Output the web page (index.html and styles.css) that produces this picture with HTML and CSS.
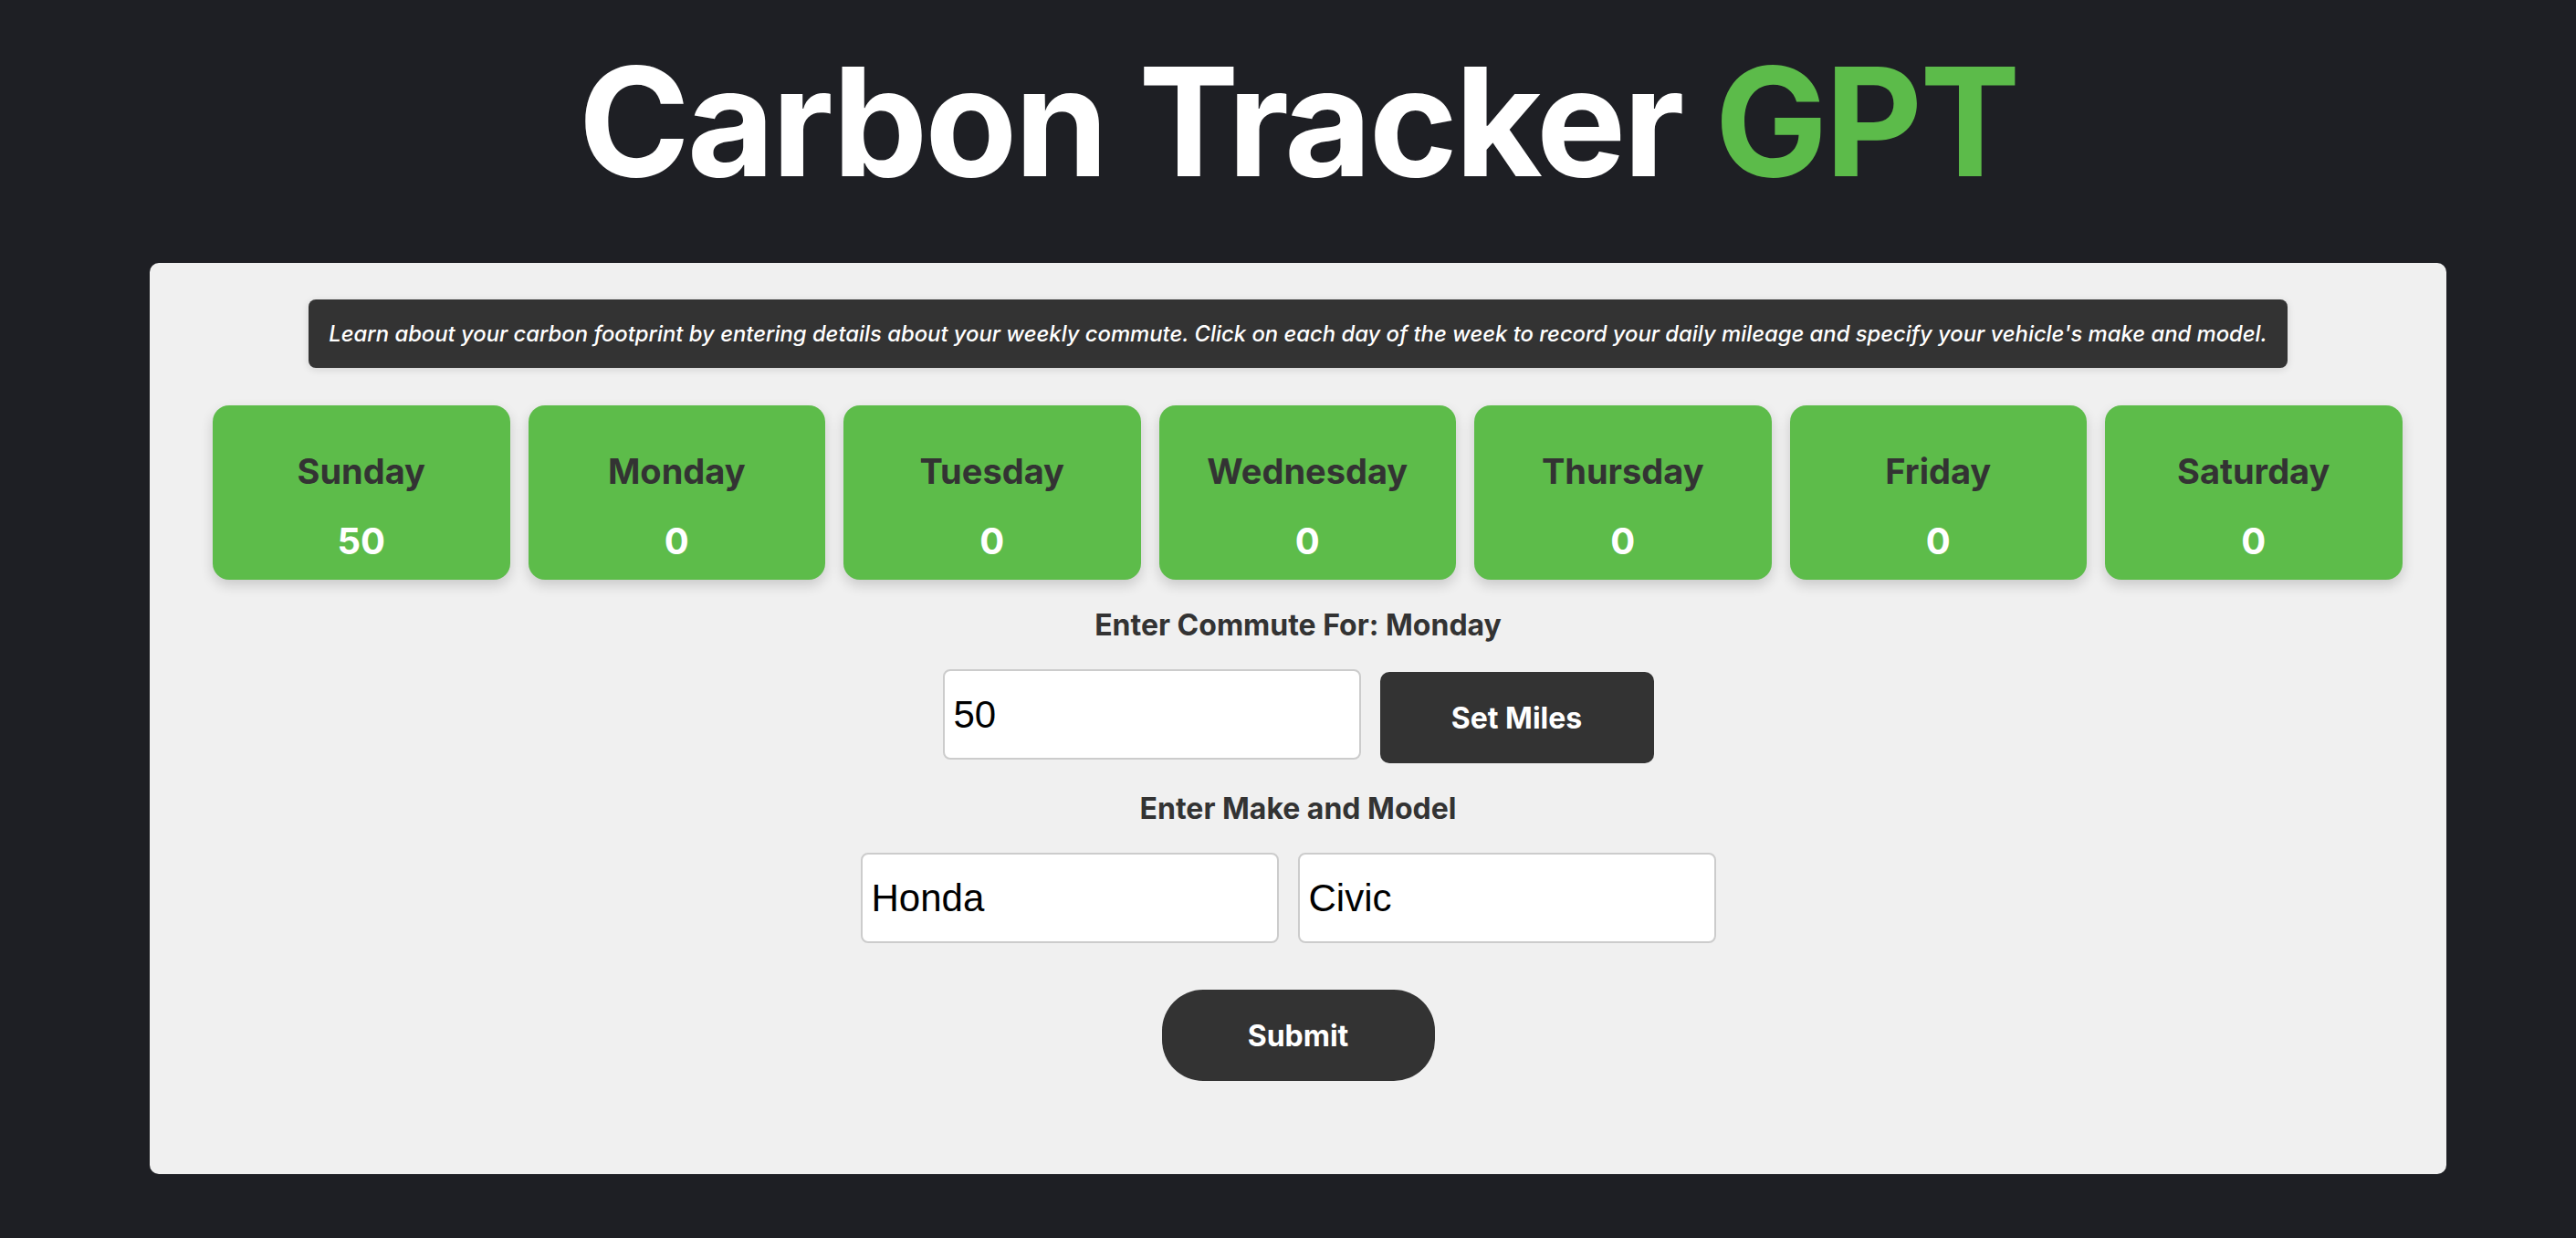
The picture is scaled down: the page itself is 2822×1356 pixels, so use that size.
FILE: index.html
```html
<!DOCTYPE html>
<html lang="en">
<head>
<meta charset="utf-8">
<title>Carbon Tracker GPT</title>
<link rel="stylesheet" href="styles.css">
</head>
<body>
<div class="page">
  <h1 class="title">Carbon Tracker <span class="accent">GPT</span></h1>
  <main class="panel">
    <div class="info-wrap">
      <p class="info">Learn about your carbon footprint by entering details about your weekly commute. Click on each day of the week to record your daily mileage and specify your vehicle's make and model.</p>
    </div>
    <div class="days">
      <div class="day"><div class="day-name">Sunday</div><div class="day-miles">50</div></div>
      <div class="day"><div class="day-name">Monday</div><div class="day-miles">0</div></div>
      <div class="day"><div class="day-name">Tuesday</div><div class="day-miles">0</div></div>
      <div class="day"><div class="day-name">Wednesday</div><div class="day-miles">0</div></div>
      <div class="day"><div class="day-name">Thursday</div><div class="day-miles">0</div></div>
      <div class="day"><div class="day-name">Friday</div><div class="day-miles">0</div></div>
      <div class="day"><div class="day-name">Saturday</div><div class="day-miles">0</div></div>
    </div>
    <h2 class="label">Enter Commute For: Monday</h2>
    <div class="row">
      <input class="field" type="text" value="50">
      <button class="btn-set" type="button">Set Miles</button>
    </div>
    <h2 class="label">Enter Make and Model</h2>
    <div class="row">
      <input class="field" type="text" value="Honda">
      <input class="field" type="text" value="Civic">
    </div>
    <div class="submit-row">
      <button class="btn-submit" type="button">Submit</button>
    </div>
  </main>
</div>
</body>
</html>
```

FILE: styles.css
```css
html, body {
  margin: 0;
  padding: 0;
}
body {
  background: #1e1f24;
  font-family: Inter, "Noto Sans", sans-serif;
  color: #333333;
}
.page {
  padding-left: 22px;
  padding-bottom: 68px;
}
.title {
  margin: 51px 0 72px;
  font-size: 165px;
  line-height: 165px;
  font-weight: 700;
  letter-spacing: -3px;
  text-align: center;
  color: #ffffff;
}
.accent {
  color: #5cbb4a;
}
.panel {
  width: 2516px;
  margin: 0 auto;
  box-sizing: border-box;
  background: #f0f0f0;
  border-radius: 10px;
  padding: 40px 0 102px;
  display: flex;
  flex-direction: column;
  align-items: center;
}
.info-wrap {
  display: flex;
  justify-content: center;
}
.info {
  margin: 0;
  background: #333333;
  color: #ffffff;
  font-size: 23.8px;
  font-style: italic;
  font-weight: 500;
  line-height: 75px;
  height: 75px;
  padding: 0 22px;
  border-radius: 8px;
  white-space: nowrap;
  box-shadow: 0 2px 8px rgba(0, 0, 0, 0.12);
}
.days {
  align-self: stretch;
  display: flex;
  gap: 20px;
  margin: 41px 0 0 69px;
}
.day {
  width: 325.5px;
  height: 191px;
  box-sizing: border-box;
  background: #5dbc4a;
  border-radius: 18px;
  box-shadow: 0 6px 14px rgba(0, 0, 0, 0.16);
  display: flex;
  flex-direction: column;
  align-items: center;
  padding-top: 48px;
  gap: 29px;
  font-size: 38px;
  line-height: 48px;
  font-weight: 700;
}
.day-name {
  color: #333333;
}
.day-miles {
  color: #ffffff;
  font-size: 40px;
}
.label {
  margin: 32px 0 30px;
  font-size: 32px;
  line-height: 36px;
  font-weight: 700;
  color: #333333;
}
.row {
  display: flex;
  align-items: flex-start;
  justify-content: center;
}
.field {
  width: 458px;
  height: 99px;
  box-sizing: border-box;
  border: 2px solid #cccccc;
  border-radius: 8px;
  background: #ffffff;
  padding: 0 10px;
  font-family: "Liberation Sans", Arial, sans-serif;
  font-size: 42px;
  color: #000000;
  margin: 0 22px 0 0;
  outline: none;
}
.row .field:first-child {
  margin-right: 21px;
}
.btn-set {
  width: 300px;
  height: 100px;
  margin-top: 3px;
  border: none;
  border-radius: 10px;
  background: #333333;
  color: #ffffff;
  font-family: Inter, "Noto Sans", sans-serif;
  font-size: 32px;
  font-weight: 700;
}
.submit-row {
  display: flex;
  justify-content: center;
  margin-top: 51px;
}
.btn-submit {
  width: 299px;
  height: 100px;
  border: none;
  border-radius: 45px;
  background: #333333;
  color: #ffffff;
  font-family: Inter, "Noto Sans", sans-serif;
  font-size: 32px;
  font-weight: 700;
}
```
